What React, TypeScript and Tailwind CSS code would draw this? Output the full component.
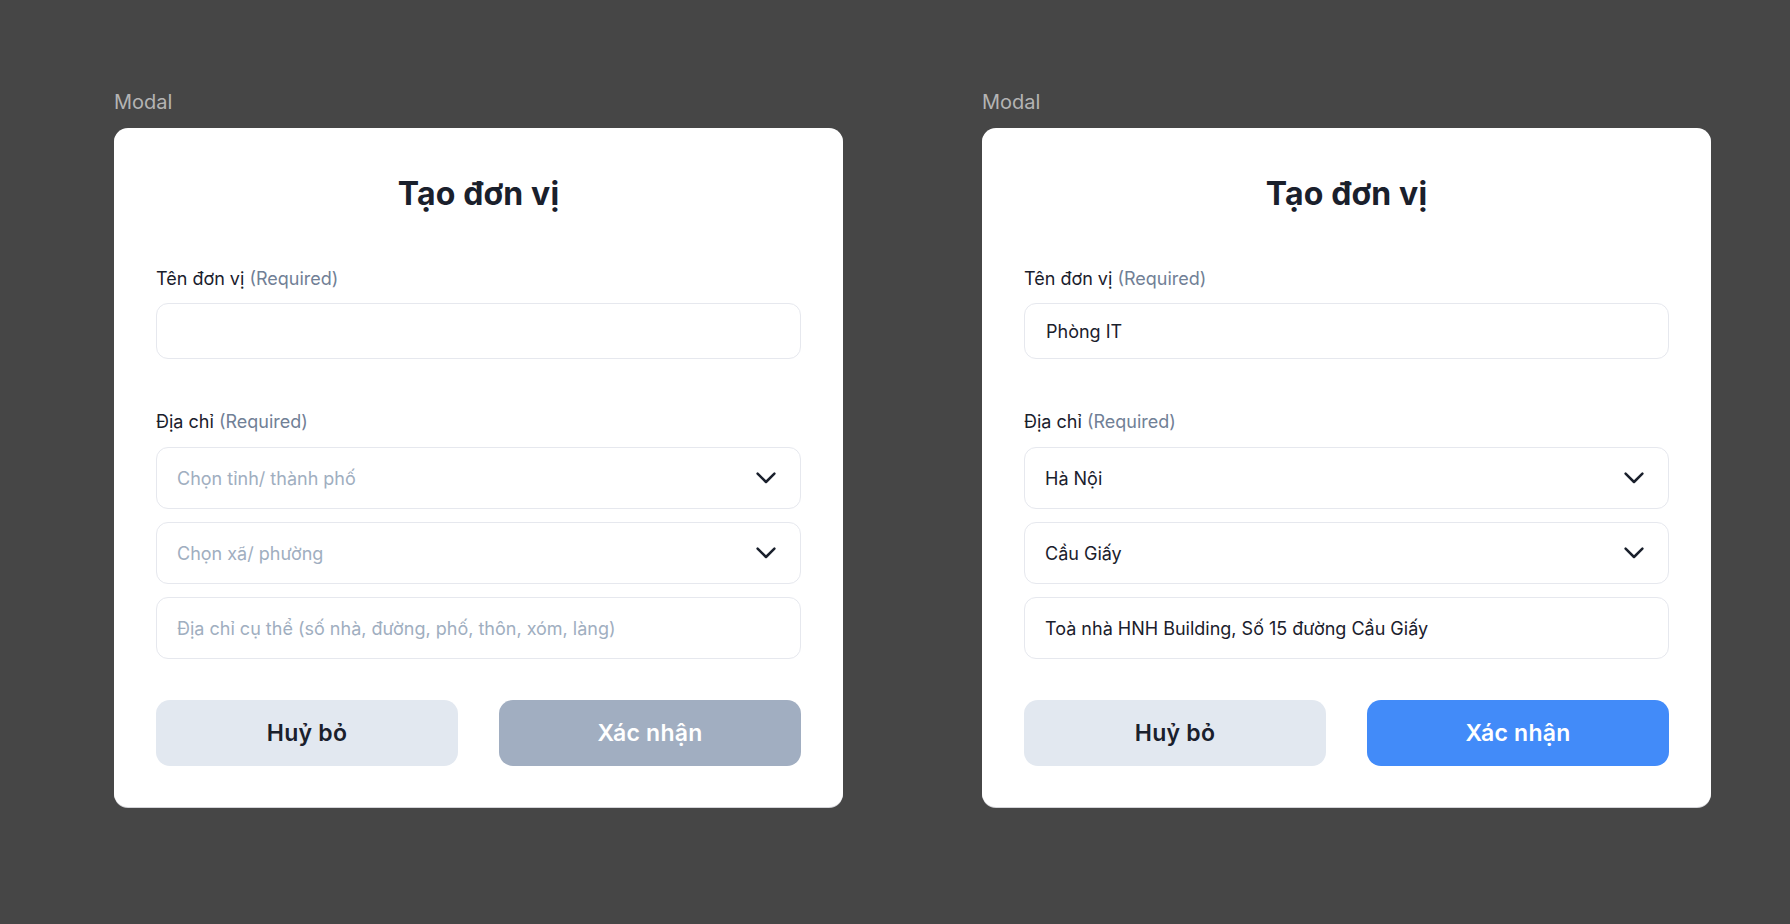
type ModalProps = {
  name?: string
  city?: string
  ward?: string
  street?: string
  canSubmit?: boolean
}

const FONT = { fontFamily: 'Inter, "Noto Sans", sans-serif' }

function Chevron() {
  return (
    <svg width="20" height="12" viewBox="0 0 20 12" fill="none" className="text-[#1a202c]">
      <path d="M1.6 1.6 L10 10 L18.4 1.6" stroke="currentColor" strokeWidth="2.5" strokeLinecap="round" strokeLinejoin="round" />
    </svg>
  )
}

function Label({ text }: { text: string }) {
  return (
    <div className="text-[18px] leading-[24px] text-[#1a202c]">
      {text} <span className="text-[#718096]">(Required)</span>
    </div>
  )
}

function Select({ value, placeholder }: { value?: string; placeholder: string }) {
  return (
    <button className="h-[62px] w-full flex items-center justify-between pl-5 pr-[24px] rounded-xl border border-[#e6e8ee] bg-white text-left">
      <span className={value ? 'text-[18px] text-[#1a202c]' : 'text-[18px] text-[#a0aec0]'}>
        {value ?? placeholder}
      </span>
      <Chevron />
    </button>
  )
}

function Modal({ name, city, ward, street, canSubmit }: ModalProps) {
  return (
    <div className="w-[729px] flex flex-col">
      <div className="text-[20px] leading-[24px] text-[#b4b4b4] mb-[14px]">Modal</div>
      <div className="bg-white rounded-[14px] px-[42px] pt-[48px] pb-[41px] shadow-[0_1px_0_#d4d4d8]">
        <h2 className="text-[32px] leading-[36px] font-bold text-center text-[#1a202c] tracking-[0.005em]">Tạo đơn vị</h2>

        <div className="mt-[55px]">
          <Label text="Tên đơn vị" />
          <div className="mt-3 h-[56px] flex items-center px-[21px] rounded-xl border border-[#e6e8ee]">
            <span className="text-[18px] text-[#1a202c]">{name}</span>
          </div>
        </div>

        <div className="mt-[51px]">
          <Label text="Địa chỉ" />
          <div className="mt-[13px] flex flex-col gap-[13px]">
            <Select value={city} placeholder="Chọn tỉnh/ thành phố" />
            <Select value={ward} placeholder="Chọn xã/ phường" />
            <div className="h-[62px] flex items-center px-5 rounded-xl border border-[#e6e8ee]">
              <span className={street ? 'text-[18px] text-[#1a202c]' : 'text-[18px] text-[#a0aec0]'}>
                {street ?? 'Địa chỉ cụ thể (số nhà, đường, phố, thôn, xóm, làng)'}
              </span>
            </div>
          </div>
        </div>

        <div className="mt-[41px] grid grid-cols-2 gap-[41px]">
          <button className="h-[66px] rounded-[14px] bg-[#e2e8f0] text-[23px] font-semibold text-[#1a202c] tracking-[0.01em]">
            Huỷ bỏ
          </button>
          <button
            className={
              canSubmit
                ? 'h-[66px] rounded-[14px] bg-[#428bf9] text-[23px] font-semibold text-white tracking-[0.01em]'
                : 'h-[66px] rounded-[14px] bg-[#a1aec1] text-[23px] font-semibold text-white tracking-[0.01em]'
            }
          >
            Xác nhận
          </button>
        </div>
      </div>
    </div>
  )
}

export default function App() {
  return (
    <div className="w-full h-[924px] bg-[#464646] flex gap-[139px] pl-[114px] pt-[90px]" style={FONT}>
      <Modal />
      <Modal
        name="Phòng IT"
        city="Hà Nội"
        ward="Cầu Giấy"
        street="Toà nhà HNH Building, Số 15 đường Cầu Giấy"
        canSubmit
      />
    </div>
  )
}
